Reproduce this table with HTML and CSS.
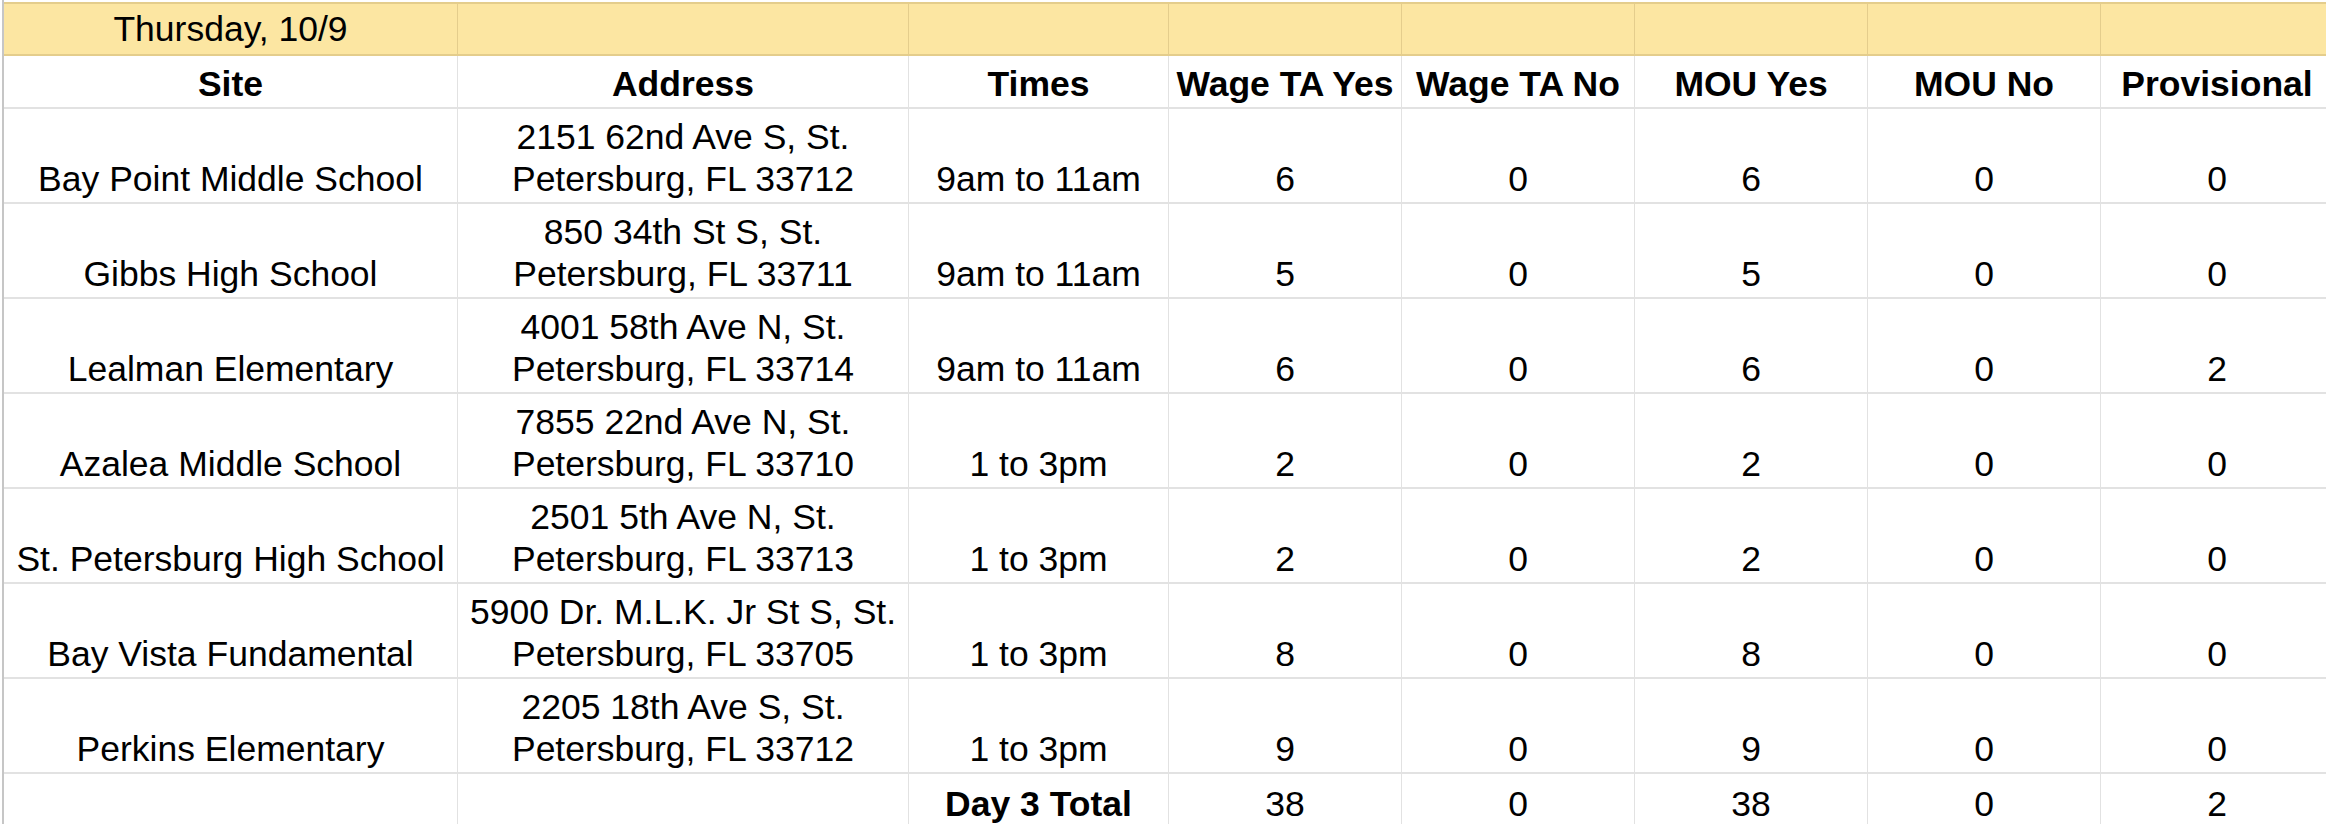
FILE: index.html
```html
<!DOCTYPE html>
<html>
<head>
<meta charset="utf-8">
<link rel="stylesheet" href="styles.css">
</head>
<body>
<div class="sheet">
  <div class="grid">
    <div class="c band">Thursday, 10/9</div>
    <div class="c band"></div>
    <div class="c band"></div>
    <div class="c band"></div>
    <div class="c band"></div>
    <div class="c band"></div>
    <div class="c band"></div>
    <div class="c band"></div>

    <div class="c head">Site</div>
    <div class="c head">Address</div>
    <div class="c head">Times</div>
    <div class="c head">Wage TA Yes</div>
    <div class="c head">Wage TA No</div>
    <div class="c head">MOU Yes</div>
    <div class="c head">MOU No</div>
    <div class="c head">Provisional</div>

    <div class="c">Bay Point Middle School</div>
    <div class="c">2151 62nd Ave S, St.<br>Petersburg, FL 33712</div>
    <div class="c">9am to 11am</div>
    <div class="c">6</div><div class="c">0</div><div class="c">6</div><div class="c">0</div><div class="c">0</div>

    <div class="c">Gibbs High School</div>
    <div class="c">850 34th St S, St.<br>Petersburg, FL 33711</div>
    <div class="c">9am to 11am</div>
    <div class="c">5</div><div class="c">0</div><div class="c">5</div><div class="c">0</div><div class="c">0</div>

    <div class="c">Lealman Elementary</div>
    <div class="c">4001 58th Ave N, St.<br>Petersburg, FL 33714</div>
    <div class="c">9am to 11am</div>
    <div class="c">6</div><div class="c">0</div><div class="c">6</div><div class="c">0</div><div class="c">2</div>

    <div class="c">Azalea Middle School</div>
    <div class="c">7855 22nd Ave N, St.<br>Petersburg, FL 33710</div>
    <div class="c">1 to 3pm</div>
    <div class="c">2</div><div class="c">0</div><div class="c">2</div><div class="c">0</div><div class="c">0</div>

    <div class="c">St. Petersburg High School</div>
    <div class="c">2501 5th Ave N, St.<br>Petersburg, FL 33713</div>
    <div class="c">1 to 3pm</div>
    <div class="c">2</div><div class="c">0</div><div class="c">2</div><div class="c">0</div><div class="c">0</div>

    <div class="c">Bay Vista Fundamental</div>
    <div class="c">5900 Dr. M.L.K. Jr St S, St.<br>Petersburg, FL 33705</div>
    <div class="c">1 to 3pm</div>
    <div class="c">8</div><div class="c">0</div><div class="c">8</div><div class="c">0</div><div class="c">0</div>

    <div class="c">Perkins Elementary</div>
    <div class="c">2205 18th Ave S, St.<br>Petersburg, FL 33712</div>
    <div class="c">1 to 3pm</div>
    <div class="c">9</div><div class="c">0</div><div class="c">9</div><div class="c">0</div><div class="c">0</div>

    <div class="c total"></div>
    <div class="c total"></div>
    <div class="c total bold">Day 3 Total</div>
    <div class="c total">38</div><div class="c total">0</div><div class="c total">38</div><div class="c total">0</div><div class="c total">2</div>
  </div>
</div>
</body>
</html>
```
FILE: styles.css
```css
html, body {
  margin: 0;
  padding: 0;
  background: #ffffff;
  overflow: hidden;
}

.sheet {
  margin-left: 2px;
  padding-top: 2px;
  border-left: 2px solid #c6c6c6;
  min-height: 100vh;
  box-sizing: border-box;
}

.grid {
  display: grid;
  grid-template-columns: 454px 451px 260px 233px 233px 233px 233px 233px;
  grid-template-rows: 54px 53px repeat(7, 95px) 53px;
  width: 2330px;
  font-family: "Liberation Sans", Arial, sans-serif;
  font-size: 35.5px;
  line-height: 42px;
  color: #000;
}

.c {
  box-sizing: border-box;
  display: flex;
  align-items: flex-end;
  justify-content: center;
  text-align: center;
  border-right: 1px solid #e2e2e2;
  border-bottom: 2px solid #e2e2e2;
  padding-bottom: 2px;
  white-space: nowrap;
}

.band {
  background: #fce6a2;
  border-top: 2px solid #e4cd8c;
  border-bottom: 2px solid #e4cd8c;
  border-right: 1px solid #e4cd8c;
  align-items: center;
  padding-bottom: 0;
}

.head {
  font-weight: bold;
}

.bold {
  font-weight: bold;
}

.total {
  border-bottom: none;
}
```
